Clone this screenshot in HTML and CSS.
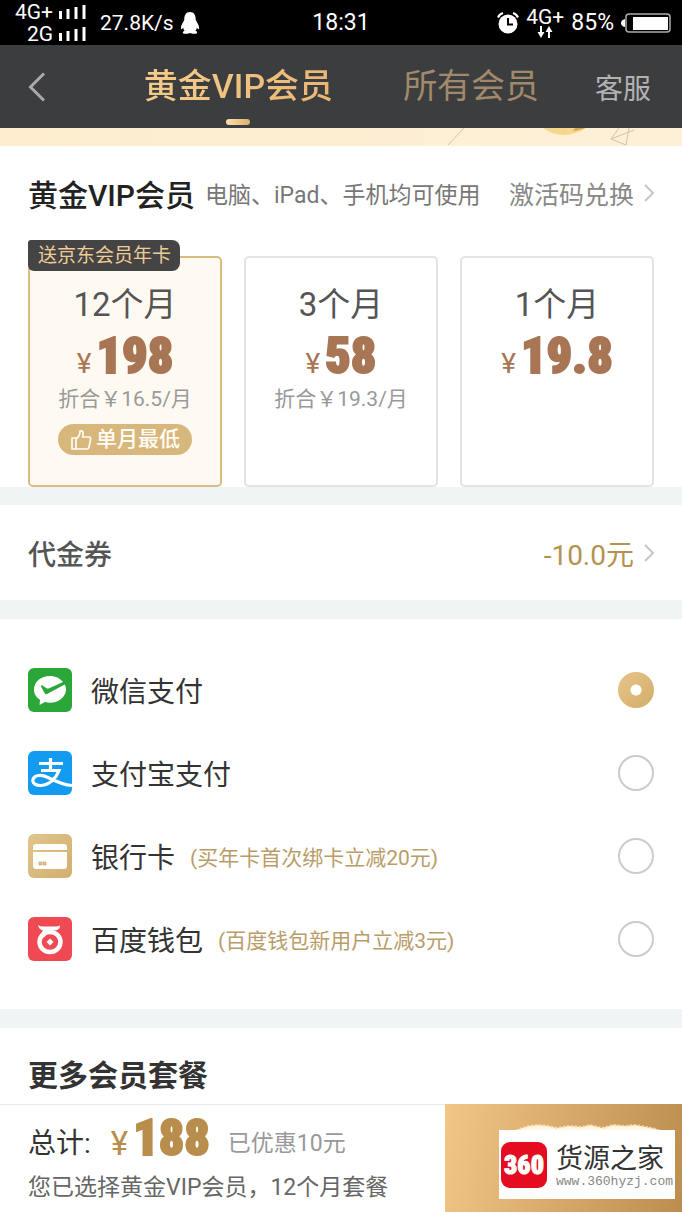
FILE: index.html
```html
<!DOCTYPE html>
<html lang="zh-CN">
<head>
<meta charset="utf-8">
<meta name="viewport" content="width=device-width, initial-scale=1">
<title>黄金VIP会员</title>
<link rel="stylesheet" href="styles.css">
</head>
<body>
<div class="status">
  <div class="status-left">
    <div class="signals">
      <div class="signal"><span>4G+</span><svg width="27" height="14" viewBox="0 0 27 14"><path d="M1.500 6v8M9 4v10M17 2v12M25 0v14" stroke="#fff" stroke-width="3"/></svg></div>
      <div class="signal"><span>2G</span><svg width="27" height="14" viewBox="0 0 27 14"><path d="M1.500 6v8M9 4v10M17 2v12M25 0v14" stroke="#fff" stroke-width="3"/></svg></div>
    </div>
    <span class="speed">27.8K/s</span>
    <svg width="20" height="22" viewBox="0 0 22 22" preserveAspectRatio="none"><path fill="#fff" d="M11 0C6.500 0 4.500 3.500 4.700 8 3 11 .8 13.500 1 16.500c.1 1.500 1.500.5 2.400-.8.300 1.300.9 2.200 1.700 3C2.500 19.300 2.500 21.600 5 21.800c2.500.2 5-.2 6-.8 1 .6 3.500 1 6 .8 2.500-.2 2.500-2.500-.1-3.100.8-.8 1.400-1.700 1.700-3 .9 1.300 2.300 2.300 2.400.8.200-3-2-5.500-3.700-8.500C17.500 3.500 15.500 0 11 0z"/></svg>
  </div>
  <time class="clock">18:31</time>
  <div class="status-right">
    <svg width="22" height="22" viewBox="0 0 22 22"><circle cx="11" cy="12" r="9.500" fill="#fff"/><path d="M11 6v6.500h5" stroke="#000" stroke-width="2" fill="none"/><path d="M1 5.500Q2.500 2 6 1M16 1q3.500 1 5 4.500" stroke="#fff" stroke-width="2" fill="none"/></svg>
    <div class="network"><span>4G+</span><svg width="18" height="12" viewBox="0 0 18 12"><path d="M5 0v7M13 5v7" stroke="#fff" stroke-width="2"/><path fill="#fff" d="M1.500 6h7L5 12zM9.500 6h7L13 0z"/></svg></div>
    <span class="percent">85%</span>
    <svg width="50" height="20" viewBox="0 0 50 20"><rect x="5" y="1" width="44" height="18" rx="3" fill="none" stroke="#aaa" stroke-width="1.500"/><rect x="12" y="4" width="35" height="13" fill="#fff"/><path d="M4 6v8Q0 13 0 10t4-4z" fill="#fff"/></svg>
  </div>
</div>
<header class="header">
  <button class="back" aria-label="返回"><svg width="18" height="30" viewBox="0 0 18 30"><path d="M16 1.500 2.500 15 16 28.500" fill="none" stroke="#aaa" stroke-width="3"/></svg></button>
  <nav class="tabs">
    <a class="tab tab-active" href="#gold">黄金VIP会员</a>
    <a class="tab" href="#all">所有会员</a>
  </nav>
  <a class="service" href="#service">客服</a>
</header>
<svg class="banner" viewBox="0 0 682 18" preserveAspectRatio="xMaxYMin slice"><defs><linearGradient id="cream"><stop offset="0" stop-color="#feedcf"/><stop offset="1" stop-color="#fdf0d7"/></linearGradient></defs><rect width="682" height="18" fill="url(#cream)"/><path d="M543 0q20 14 43 0z" fill="#f6d78d"/><path d="M573 3q8-1 12-3h-10z" fill="#d7a950"/><path d="m464 0-16 17M619 0l-8 11 15 6 3-17M611 11l23-9" fill="none" stroke="#cfc3aa"/></svg>
<main>
  <section class="plans" id="gold">
    <div class="plans-head">
      <h1>黄金VIP会员</h1>
      <p>电脑、iPad、手机均可使用</p>
      <a class="redeem" href="#redeem">激活码兑换<svg class="chevron" viewBox="0 0 10 18"><path d="m1 1 8 8-8 8" fill="none" stroke="#c8c8c8" stroke-width="2"/></svg></a>
    </div>
    <div class="cards">
      <button class="card card-selected">
        <span class="tag">送京东会员年卡</span>
        <span class="term">12个月</span>
        <span class="price"><span class="yen">¥</span>198</span>
        <span class="monthly">折合￥16.5/月</span>
        <span class="lowest"><svg width="22" height="22" viewBox="0 0 22 22" fill="none" stroke="#fffdf5" stroke-width="1.700" stroke-linejoin="round"><path d="M2 9h4v11H2zM6 10c3-2 4-4 4-8 3-1 4 2 2.500 6H19q2 0 1.500 3l-1.500 7q-.5 2-2 2H6"/></svg>单月最低</span>
      </button>
      <button class="card">
        <span class="term">3个月</span>
        <span class="price"><span class="yen">¥</span>58</span>
        <span class="monthly">折合￥19.3/月</span>
      </button>
      <button class="card">
        <span class="term">1个月</span>
        <span class="price"><span class="yen">¥</span>19.8</span>
      </button>
    </div>
  </section>
  <a class="coupon" href="#coupon">
    <span class="coupon-name">代金券</span>
    <span class="coupon-value">-10.0元</span>
    <svg class="chevron" viewBox="0 0 10 18"><path d="m1 1 8 8-8 8" fill="none" stroke="#c8c8c8" stroke-width="2"/></svg>
  </a>
  <section class="pay">
    <label class="method">
      <svg class="logo" viewBox="0 0 44 44"><rect width="44" height="44" rx="6" fill="#2ba638"/><path fill="#fff" d="M22 8C13 8 6 13.800 6 21.500c0 4.500 2.400 8 6 10.300L11.500 37l5.500-3c1.500.5 3.200.7 5 .7 9 0 16-6 16-13.200 0-2-.5-3.500-1.200-5L19 26c-1 .5-1.700.3-2.300-.7L13 18.500c-.3-1 .7-1.600 1.500-1l4 2.800c.7.400 1.500.4 2.200.1L35 14C32 10.300 27.500 8 22 8z"/></svg>
      <span class="name">微信支付</span>
      <input type="radio" name="pay" checked>
    </label>
    <label class="method">
      <svg class="logo" viewBox="0 0 44 44"><rect width="44" height="44" rx="6" fill="#129bf0"/><path d="M11 12.500h24M22.500 7v12M13 19.500h18c-2.500 7-9 14.500-18 15-5.500.2-9-2.500-8-6 1.500-5 9-5 15-2 8 4 15 7.500 24 8" fill="none" stroke="#fff" stroke-width="3.200"/></svg>
      <span class="name">支付宝支付</span>
      <input type="radio" name="pay">
    </label>
    <label class="method">
      <svg class="logo" viewBox="0 0 44 44"><defs><linearGradient id="bank" x2="1" y2="1"><stop stop-color="#e2c58e"/><stop offset="1" stop-color="#d2ae70"/></linearGradient></defs><rect width="44" height="44" rx="6" fill="url(#bank)"/><path fill="#fffefa" d="M5 16v-3q0-3 3-3h28q3 0 3 3v3zM5 18h34v14q0 3-3 3H8q-3 0-3-3z"/><path d="M11 28h3v3h-3zM15 28h3v3h-3z" fill="#dcc498" stroke="#c9ab78" stroke-width=".7"/></svg>
      <span class="name">银行卡</span><span class="hint">(买年卡首次绑卡立减20元)</span>
      <input type="radio" name="pay">
    </label>
    <label class="method">
      <svg class="logo" viewBox="0 0 44 44"><rect width="44" height="44" rx="6" fill="#ef4a54"/><path fill="#fff" d="M10 8q2 1.500 5 1.500h12q3 0 5-1 0 4.500-5 5h-5l-6 7-5-1 4-6q-4-1-5-5.500z"/><ellipse cx="22" cy="25" rx="10.500" ry="10" fill="none" stroke="#fff" stroke-width="4.500"/><path d="m22 21.500 3.500 3.500-3.500 3.500-3.500-3.500z" fill="#fff"/></svg>
      <span class="name">百度钱包</span><span class="hint">(百度钱包新用户立减3元)</span>
      <input type="radio" name="pay">
    </label>
  </section>
  <section class="more" id="all"><h2>更多会员套餐</h2></section>
</main>
<footer class="checkout">
  <div class="summary">
    <div class="total"><span class="total-label">总计:</span><span class="total-price"><span class="total-yen">¥</span>188</span><span class="saved">已优惠10元</span></div>
    <p>您已选择黄金VIP会员，12个月套餐</p>
  </div>
  <button class="buy" aria-label="开通">
    <svg class="gleam" viewBox="0 0 150 12"><path d="m0 12 6-4 10-3 9-1 10 1 9 2 12-2 13 1 8-2 12 3 11-3 12 1 10-1 11 2 10 2 7 4z" fill="#fff6e3" stroke="#f8dfb4" stroke-width="2" stroke-dasharray="2 2"/></svg>
    <span class="watermark">
      <span class="mark">360</span>
      <span class="site"><span class="site-name">货源之家</span><span class="site-url">www.360hyzj.com</span></span>
    </span>
  </button>
</footer>
</body>
</html>
```
FILE: styles.css
```css
* { box-sizing: border-box; }
body { margin: 0; min-height: 100vh; background: #f0f4f5; color: #333; font-family: Roboto, "Noto Sans CJK SC", sans-serif; }
h1, h2, p { margin: 0; }
a { color: inherit; text-decoration: none; }
button { margin: 0; padding: 0; border: 0; background: none; font: inherit; color: inherit; cursor: pointer; }
svg { display: block; flex: none; }

.status { display: grid; grid-template-columns: 1fr auto 1fr; align-items: center; height: 45px; padding: 0 11px; background: #000; color: #fff; }
.status-left, .status-right { display: flex; align-items: center; gap: 6px; }
.status-right { justify-content: flex-end; gap: 7px; }
.signals { width: 75px; margin-right: 8px; }
.signal { display: flex; align-items: center; justify-content: flex-end; gap: 6px; font-size: 21px; line-height: 22px; }
.speed { font-size: 21px; }
.percent { font-size: 23px; }
.clock { font-size: 23px; line-height: 45px; }
.network { display: flex; flex-direction: column; align-items: center; font-size: 21px; line-height: 21px; }
.network svg { margin-top: -2px; }

.header { display: flex; align-items: center; height: 83px; padding: 0 31px 0 28px; background: #3c3d3f; }
.back { width: 28px; height: 44px; display: grid; align-items: center; }
.tabs { flex: 1; display: flex; justify-content: center; gap: 70px; padding-left: 32px; }
.tab { position: relative; padding: 16px 0 17px; font-size: 34px; line-height: 50px; color: #a18a6a; }
.tab-active { color: #f0c27e; background: linear-gradient(100deg, #f6cd8b, #e9b574) text; -webkit-text-fill-color: transparent; font-weight: 500; }
.tab-active::after { content: ""; position: absolute; left: 50%; bottom: 3px; width: 24px; height: 6px; margin-left: -12px; border-radius: 3px; background: linear-gradient(90deg, #fbe0b0, #dcae69); }
.service { font-size: 28px; color: #b2b2b2; }
.banner { width: 100%; height: 18px; }

.plans { padding: 24px 28px 0; background: #fff; }
.plans-head { display: flex; align-items: center; height: 46px; white-space: nowrap; }
.plans-head h1 { font-size: 30px; font-weight: 500; color: #222; }
.plans-head p { margin-left: 10px; font-size: 23px; color: #777; }
.redeem { display: flex; align-items: center; gap: 10px; margin-left: auto; font-size: 25px; color: #888; }
.chevron { width: 10px; height: 18px; }
.cards { display: grid; grid-template-columns: repeat(3, 1fr); gap: 22px; padding-top: 40px; }
.card { position: relative; display: flex; flex-direction: column; align-items: center; height: 231px; padding-top: 24px; border: 2px solid #e3e3e3; border-radius: 5px; background: #fff; }
.card-selected { border-color: #d8bc80; background: #fefaf1; }
.tag { position: absolute; left: -2px; top: -18px; padding: 0 9px 0 10px; border-radius: 3px 8px 8px 6px; background: #444; color: #efcd96; font-size: 19px; line-height: 31px; white-space: nowrap; }
.term { font-size: 33px; line-height: 46px; color: #555; }
.price, .total-price { display: flex; align-items: baseline; gap: 5px; font-family: "Roboto Condensed", "Liberation Sans", sans-serif; font-size: 50px; font-weight: 900; -webkit-text-stroke: 2px currentColor; }
.price { height: 56px; line-height: 56px; color: #a87555; }
.yen, .total-yen { font-family: Roboto, sans-serif; font-weight: 400; -webkit-text-stroke: 0; }
.yen { font-size: 28px; }
.monthly { font-size: 21px; line-height: 30px; color: #999; }
.lowest { display: flex; align-items: center; gap: 4px; margin-top: 10px; padding: 0 12px; border-radius: 16px; background: #d8b77c; color: #fffdf5; font-size: 21px; font-weight: 500; line-height: 31px; }

.coupon { display: flex; align-items: center; height: 95px; margin-top: 18px; padding: 0 28px; background: #fff; }
.coupon-name { font-size: 28px; font-weight: 500; color: #555; }
.coupon-value { margin: 0 10px 0 auto; font-size: 28px; color: #b5924f; }

.pay { margin-top: 19px; padding: 29px 28px; background: #fff; }
.method { display: flex; align-items: center; height: 83px; white-space: nowrap; }
.logo { width: 44px; height: 44px; }
.name { margin-left: 19px; font-size: 28px; color: #333; }
.hint { margin-left: 15px; font-size: 21px; color: #b99c69; }
.method input { appearance: none; width: 36px; height: 36px; margin: 0 0 0 auto; border: 2px solid #ccc; border-radius: 50%; background: #fff; }
.method input:checked { border: 0; background: radial-gradient(circle, #fff 5px, transparent 6px), linear-gradient(135deg, #e6c58b, #d4ac68); }

.more { height: 76px; margin-top: 19px; padding: 25px 28px 0; background: #fff; }
.more h2 { font-size: 30px; line-height: 46px; font-weight: 700; color: #333; }

.checkout { display: flex; height: 108px; background: #fff; }
.summary { flex: 1; padding: 6px 0 0 28px; border-top: 1px solid #e9e9e9; white-space: nowrap; }
.total { display: flex; align-items: center; height: 60px; }
.total-label { font-size: 28px; }
.total-price { margin-left: 20px; color: #b98d4b; line-height: 56px; }
.total-yen { font-size: 33px; }
.saved { margin-left: 18px; font-size: 23px; color: #999; }
.summary p { font-size: 23px; line-height: 34px; color: #666; }
.buy { position: relative; width: 237px; background: linear-gradient(100deg, #f2c687, #bb8d4e); }
.gleam { position: absolute; right: 19px; top: 17px; width: 150px; height: 12px; }
.watermark { position: absolute; right: 7px; top: 26px; display: flex; align-items: center; gap: 9px; width: 176px; height: 69px; padding-left: 2px; background: #fff; }
.mark { width: 46px; border-radius: 9px; background: #e50b20; color: #fff; font-family: "Roboto Condensed", "Liberation Sans", sans-serif; font-size: 26px; font-weight: 900; line-height: 46px; text-align: center; -webkit-text-stroke: 1px #fff; }
.site { display: flex; flex-direction: column; align-items: flex-start; }
.site-name { font-family: "Noto Sans CJK SC", sans-serif; font-size: 27px; line-height: 34px; color: #333; }
.site-url { font-family: "Liberation Mono", monospace; font-size: 13px; line-height: 16px; color: #888; }
```
